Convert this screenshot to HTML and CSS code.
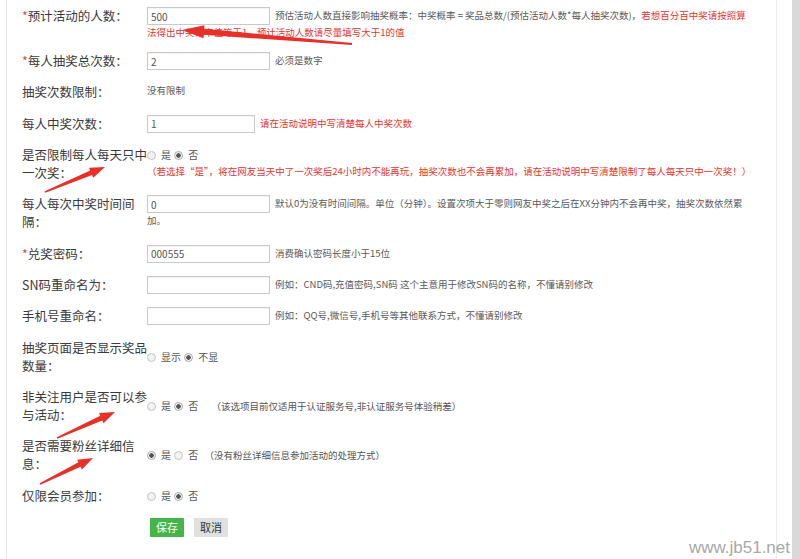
FILE: index.html
```html
<!DOCTYPE html>
<html lang="zh-CN">
<head>
  <meta charset="UTF-8">
  <meta name="viewport" content="width=device-width, initial-scale=1.0">
  <title>抽奖活动设置</title>
  <link rel="stylesheet" href="styles.css">
</head>
<body>
  <div class="page">
    <form class="form" id="lotteryForm">
      <div class="row first">
        <div class="label"><i>*</i>预计活动的人数：</div>
        <div class="field">
          <input class="txt" type="text" value="500"><span class="tip">预估活动人数直接影响抽奖概率：中奖概率 = 奖品总数/(预估活动人数*每人抽奖次数)，</span><span class="tip red">若想百分百中奖请按照算</span><br><span class="tip red">法得出中奖概率值等于1，预计活动人数请尽量填写大于1的值</span>
        </div>
      </div>

      <div class="row">
        <div class="label"><i>*</i>每人抽奖总次数：</div>
        <div class="field">
          <input class="txt" type="text" value="2"><span class="tip">必须是数字</span>
        </div>
      </div>

      <div class="row">
        <div class="label">抽奖次数限制：</div>
        <div class="field"><span class="tip">没有限制</span></div>
      </div>

      <div class="row">
        <div class="label">每人中奖次数：</div>
        <div class="field">
          <input class="txt short" type="text" value="1"><span class="tip red">请在活动说明中写清楚每人中奖次数</span>
        </div>
      </div>

      <div class="row">
        <div class="label">是否限制每人每天只中一次奖：</div>
        <div class="field">
          <div class="radios">
            <label><input type="radio" name="daily">是</label>
            <label><input type="radio" name="daily" checked>否</label>
          </div>
          <div class="warn">（若选择“是”，将在网友当天中了一次奖后24小时内不能再玩，抽奖次数也不会再累加，请在活动说明中写清楚限制了每人每天只中一次奖！）</div>
        </div>
      </div>

      <div class="row">
        <div class="label">每人每次中奖时间间隔：</div>
        <div class="field">
          <input class="txt" type="text" value="0"><span class="tip">默认0为没有时间间隔。单位（分钟）。设置次项大于零则网友中奖之后在XX分钟内不会再中奖，抽奖次数依然累加。</span>
        </div>
      </div>

      <div class="row">
        <div class="label"><i>*</i>兑奖密码：</div>
        <div class="field">
          <input class="txt" type="text" value="000555"><span class="tip">消费确认密码长度小于15位</span>
        </div>
      </div>

      <div class="row">
        <div class="label">SN码重命名为：</div>
        <div class="field">
          <input class="txt" type="text" value=""><span class="tip">例如：CND码,充值密码,SN码 这个主意用于修改SN码的名称，不懂请别修改</span>
        </div>
      </div>

      <div class="row">
        <div class="label">手机号重命名：</div>
        <div class="field">
          <input class="txt" type="text" value=""><span class="tip">例如：QQ号,微信号,手机号等其他联系方式，不懂请别修改</span>
        </div>
      </div>

      <div class="row middle">
        <div class="label">抽奖页面是否显示奖品数量：</div>
        <div class="field">
          <div class="radios">
            <label><input type="radio" name="showNum">显示</label>
            <label><input type="radio" name="showNum" checked>不显</label>
          </div>
        </div>
      </div>

      <div class="row middle">
        <div class="label">非关注用户是否可以参与活动：</div>
        <div class="field">
          <div class="radios">
            <label><input type="radio" name="follow">是</label>
            <label><input type="radio" name="follow" checked>否</label>
            <span class="note wide">（该选项目前仅适用于认证服务号,非认证服务号体验稍差）</span>
          </div>
        </div>
      </div>

      <div class="row middle">
        <div class="label">是否需要粉丝详细信息：</div>
        <div class="field">
          <div class="radios">
            <label><input type="radio" name="fans" checked>是</label>
            <label><input type="radio" name="fans">否</label>
            <span class="note">（没有粉丝详细信息参加活动的处理方式）</span>
          </div>
        </div>
      </div>

      <div class="row">
        <div class="label">仅限会员参加：</div>
        <div class="field">
          <div class="radios">
            <label><input type="radio" name="member">是</label>
            <label><input type="radio" name="member" checked>否</label>
          </div>
        </div>
      </div>

      <div class="actions">
        <button type="submit" class="btn save">保存</button>
        <button type="button" class="btn cancel">取消</button>
      </div>
    </form>
  </div>
  <div class="scroll"></div>

  <!-- red annotation arrows drawn over the form -->
  <svg class="marks" width="800" height="559" viewBox="0 0 800 559">
    <polygon points="352.08,43 204.18,28.82 204.46,25.33 182,30 203.4,38.29 203.68,34.8 351.92,45"/>
    <polygon points="45.31,192.74 92.11,175.09 93.27,177.86 105,167 89.03,167.7 90.19,170.47 44.69,191.26"/>
    <polygon points="57.33,438.73 102.33,420.42 103.56,423.16 115,412 99.06,413.12 100.29,415.86 56.67,437.27"/>
    <polygon points="40.35,484.72 80.63,466.86 81.95,469.55 93,458 77.11,459.67 78.43,462.37 39.65,483.28"/>
  </svg>

  <div class="watermark">www.jb51.net</div>

  <script>
    document.getElementById('lotteryForm').addEventListener('submit', function(e) {
      e.preventDefault();
    });
  </script>
</body>
</html>
```

FILE: styles.css
```css
body {
  margin: 0;
  height: 559px;
  overflow: hidden;
  display: flex;
  background: #fff;
  color: #3a3a3a;
  font-family: "Noto Sans CJK SC", "Noto Sans", sans-serif;
}
.page {
  margin-left: 6px;
  width: 771px;
  box-sizing: border-box;
  padding: 7px 0 0 15px;
  border-left: 1px solid #e6e6e6;
  border-right: 1px solid #ececec;
}
.scroll {
  margin-left: auto;
  width: 8px;
  background: #d9d9d9;
}
.row {
  display: flex;
  align-items: flex-start;
  margin-bottom: 13.33px;
}
.row.first {
  margin-bottom: 12px;
}
.row.middle {
  align-items: center;
}
.label {
  width: 125px;
  flex-shrink: 0;
  font-size: 12.5px;
  line-height: 18px;
}
.label i {
  font-style: normal;
  color: #e8433c;
}
.field {
  width: 603px;
  font-size: 9.5px;
  line-height: 15px;
  color: #5a5a5a;
}
.txt {
  width: 123px;
  height: 18px;
  box-sizing: border-box;
  margin: 0 5px 0 0;
  padding: 0 3px;
  border: 1px solid #c9c9c9;
  box-shadow: inset 0 1px 1px rgba(0,0,0,0.05);
  font-family: inherit;
  font-size: 10px;
  color: #555;
  vertical-align: middle;
  outline: none;
}
.txt.short {
  width: 108px;
}
.red,
.warn {
  color: #e8352e;
}
.radios {
  line-height: 18px;
  font-size: 10px;
  color: #555;
}
.radios label {
  margin-right: 1px;
}
.radios input {
  appearance: none;
  -webkit-appearance: none;
  width: 9px;
  height: 9px;
  margin: 0 5px 0 0;
  border: 1px solid #c4c4c4;
  border-radius: 50%;
  background: #f2f2f2;
  box-sizing: border-box;
  vertical-align: -1px;
}
.radios input:checked {
  background: radial-gradient(circle, #555 0, #555 2px, #f2f2f2 2.5px);
  border-color: #aaa;
}
.note {
  margin-left: 3px;
  font-size: 9.5px;
}
.note.wide {
  margin-left: 10px;
}
.warn {
  font-size: 9.5px;
  line-height: 14px;
}
.actions {
  padding-left: 128px;
  display: flex;
  gap: 10px;
}
.btn {
  width: 34px;
  height: 19px;
  padding: 0;
  border: none;
  border-radius: 1px;
  font-family: inherit;
  font-size: 11px;
  cursor: pointer;
}
.save {
  background: #44b549;
  color: #fff;
}
.cancel {
  background: #e0e0e0;
  color: #333;
}
.marks {
  position: absolute;
  left: 0;
  top: 0;
  pointer-events: none;
}
.marks polygon {
  fill: #e8302a;
}
.watermark {
  position: absolute;
  right: 10px;
  bottom: 1px;
  font-family: "Liberation Sans", Arial, sans-serif;
  font-size: 17px;
  line-height: 20px;
  color: #a8a8a8;
}
```
